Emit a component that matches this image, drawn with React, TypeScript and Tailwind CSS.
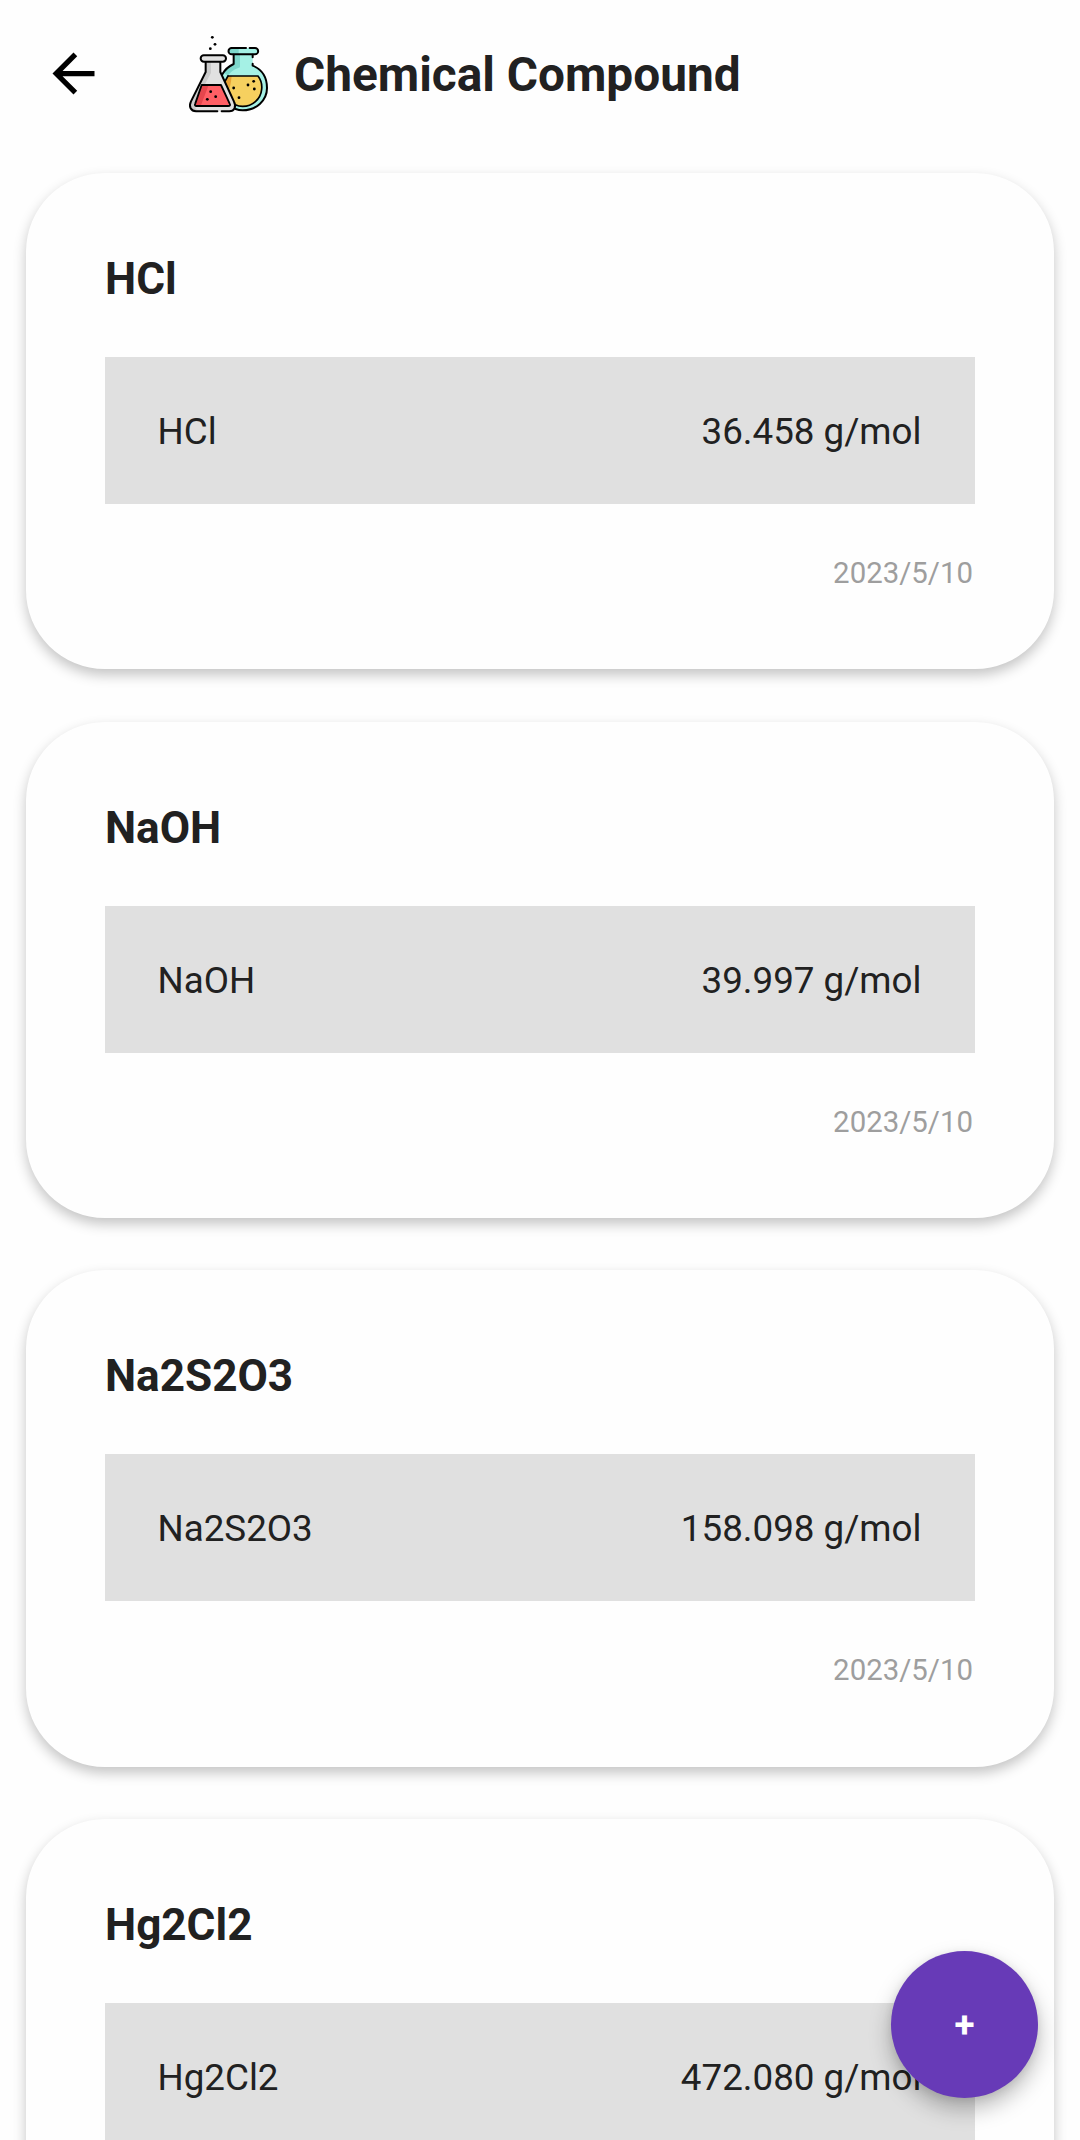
type Compound = { name: string; formula: string; mass: string; date?: string };

const compounds: Compound[] = [
  { name: 'HCl', formula: 'HCl', mass: '36.458 g/mol', date: '2023/5/10' },
  { name: 'NaOH', formula: 'NaOH', mass: '39.997 g/mol', date: '2023/5/10' },
  { name: 'Na2S2O3', formula: 'Na2S2O3', mass: '158.098 g/mol', date: '2023/5/10' },
  { name: 'Hg2Cl2', formula: 'Hg2Cl2', mass: '472.080 g/mol' },
];

function BackArrow() {
  return (
    <svg viewBox="0 0 24 24" className="size-[63px] shrink-0" fill="#000">
      <path d="M20 11H7.83l5.59-5.59L12 4l-8 8 8 8 1.41-1.41L7.83 13H20v-2z" />
    </svg>
  );
}

function Flasks() {
  return (
    <svg viewBox="0 0 300 285" className="h-[95px] w-[100px] shrink-0" fill="none" strokeLinecap="round" strokeLinejoin="round">
      {/* Round flask */}
      <path d="M161 84V114C138 124 120 150 120 184C120 226 150 253 188 253C232 253 261 224 261 186C261 154 244 130 218 118V84Z" fill="#a5f1e5" />
      <path d="M161 84V114C148 120 138 129 131 140L145 149C152 136 165 130 180 124V84Z" fill="#7ed8cc" />
      <rect x="146" y="66" width="88" height="19" rx="9" fill="#a5f1e5" />
      <path d="M155 66H176V85H155A9 9 0 0 1 155 66Z" fill="#7ed8cc" />
      <path d="M144 150H234C243 162 247 174 245 190C242 220 217 241 188 241C176 241 166 238 162 234L130 178Z" fill="#f6d05f" />
      <path d="M144 150H155C153 170 150 184 145 198L130 178Z" fill="#e9a235" />
      <path d="M144 150H234C243 162 247 174 245 190C242 220 217 241 188 241C179 241 172 239 166 236" stroke="#000" strokeWidth="5" />
      <path d="M144 150L135 166" stroke="#000" strokeWidth="5" />
      <path d="M161 86V114C146 121 135 130 127 145M218 86V94M218 113V119C245 130 261 154 261 186C261 224 228 253 188 253C180 253 174 252 167 249" stroke="#000" strokeWidth="6" />
      <path d="M198 66H155A9.500 9.500 0 0 0 155 85H225A9.500 9.500 0 0 0 225 66H209" stroke="#000" strokeWidth="6" />
      {/* Conical flask */}
      <path d="M77 106V138L33 226C25 242 33 256 48 256H148C163 256 170 242 162 227L121 138V106Z" fill="#e1e1e1" />
      <path d="M77 106V138L33 226C25 242 33 256 48 256H60C40 247 42 236 53 216L93 141V106Z" fill="#cbcbcb" />
      <path d="M65 177H123L149 233Q153 240 144 240H50Q42 240 46 232Z" fill="#ff5f65" />
      <path d="M65 177H86L62 240H50Q42 240 46 232Z" fill="#e5464d" />
      <path d="M65 177H123L149 233Q153 240 144 240H50Q42 240 46 232Z" stroke="#000" strokeWidth="5.500" />
      <path d="M77 108V138L33 226C25 242 33 256 48 256H112M125 256H148C163 256 170 242 162 227L121 138V108" stroke="#000" strokeWidth="6" />
      <rect x="62" y="88" width="76" height="19" rx="9.500" fill="#e1e1e1" stroke="#000" strokeWidth="6" />
      {/* Bubbles */}
      <g fill="#000">
        <circle cx="97" cy="34" r="4.200" />
        <circle cx="105" cy="55" r="4.200" />
        <circle cx="91" cy="68" r="4.200" />
        <circle cx="92" cy="197" r="4.200" />
        <circle cx="107" cy="212" r="4.200" />
        <circle cx="82" cy="220" r="4.200" />
        <circle cx="221" cy="166" r="4.200" />
        <circle cx="204" cy="177" r="4.200" />
        <circle cx="223" cy="189" r="4.200" />
        <circle cx="161" cy="186" r="4.200" />
        <circle cx="177" cy="215" r="4.200" />
      </g>
    </svg>
  );
}

function CompoundCard({ name, formula, mass, date }: Compound) {
  return (
    <article className="flex h-[496.1px] shrink-0 flex-col rounded-[78.75px] bg-[#fefefe] px-[78.75px] pt-[79.75px] shadow-[0_6px_13px_rgba(0,0,0,0.23)]">
      <h2 className="h-[52px] text-[44.1px] leading-[52px] font-bold">{name}</h2>
      <div className="mt-[52px] flex h-[147px] items-center justify-between bg-[#e0e0e0] pt-[2px] pr-[53.5px] pl-[52.5px] text-[36.75px] leading-[43px]">
        <span>{formula}</span>
        <span>{mass}</span>
      </div>
      {date && <time className="mt-[52px] mr-[2px] text-right text-[29.4px] leading-[35px] text-[#9e9e9e]">{date}</time>}
    </article>
  );
}

export default function App() {
  return (
    <div className="relative flex h-[2140px] w-[1080px] flex-col overflow-hidden bg-[#fefefe] font-[Roboto,sans-serif] text-[#212121]">
      <header className="flex h-[147px] shrink-0 items-center pl-[42px]">
        <button aria-label="Back">
          <BackArrow />
        </button>
        <div className="ml-[75px] flex items-center">
          <Flasks />
          <h1 className="ml-[14px] pt-[2px] text-[47.775px] leading-[56px] font-bold">Chemical Compound</h1>
        </div>
      </header>
      <main className="flex flex-col gap-[52.5px] px-[26.25px] pt-[26.25px]">
        {compounds.map((c) => (
          <CompoundCard key={c.name} {...c} />
        ))}
      </main>
      <button
        aria-label="Add compound"
        className="absolute right-[42px] bottom-[42px] flex size-[147px] items-center justify-center rounded-full bg-[#673ab7] text-[36.75px] font-bold text-white shadow-[0_11px_22px_rgba(0,0,0,0.27),0_2px_8px_rgba(0,0,0,0.08)]"
      >
        +
      </button>
    </div>
  );
}
